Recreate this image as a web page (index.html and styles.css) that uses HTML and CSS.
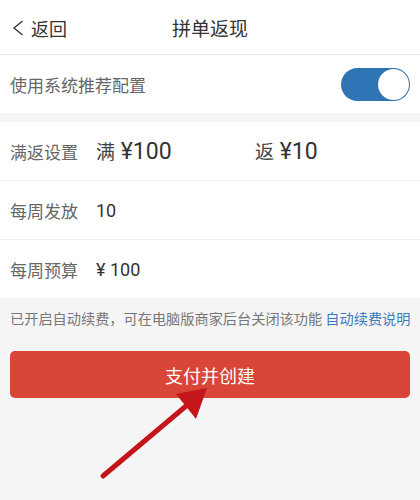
FILE: index.html
```html
<!DOCTYPE html>
<html lang="zh-CN">
<head>
  <meta charset="UTF-8">
  <meta name="viewport" content="width=device-width, initial-scale=1.0">
  <link rel="stylesheet" href="styles.css">
  <title>拼单返现</title>
</head>
<body>
  <div class="page">
    <div class="header">
      <div class="back">
        <svg class="back-icon" width="12" height="16" viewBox="0 0 12 16">
          <path d="M10.5 1 L2 8 L10.5 15" fill="none" stroke="#333" stroke-width="1.3"/>
        </svg>
        <span>返回</span>
      </div>
      <h1 class="title">拼单返现</h1>
    </div>

    <div class="switch-row">
      <span class="label">使用系统推荐配置</span>
      <div class="switch"><div class="knob"></div></div>
    </div>

    <div class="form">
      <div class="row">
        <span class="label">满返设置</span>
        <span class="big first"><span class="unit">满</span> ¥100</span>
        <span class="big"><span class="unit">返</span> ¥10</span>
      </div>
      <div class="row">
        <span class="label">每周发放</span>
        <span class="value">10</span>
      </div>
      <div class="row">
        <span class="label">每周预算</span>
        <span class="value">¥ 100</span>
      </div>
    </div>

    <div class="footer">
      <p class="note">已开启自动续费，可在电脑版商家后台关闭该功能 <a class="link">自动续费说明</a></p>
      <button class="pay">支付并创建</button>
    </div>

    <svg class="arrow" width="420" height="500" viewBox="0 0 420 500">
      <line x1="103" y1="476" x2="192" y2="401" stroke="#c4151a" stroke-width="5" stroke-linecap="round"/>
      <polygon points="207,388 176,394 196,419" fill="#c4151a"/>
    </svg>
  </div>
</body>
</html>
```

FILE: styles.css
```css
body {
  margin: 0;
  padding: 0;
  font-family: "Noto Sans CJK SC", "Noto Sans", sans-serif;
  background-color: #f5f5f5;
}

.page {
  position: relative;
  width: 420px;
  height: 500px;
  overflow: hidden;
}

.header {
  height: 55px;
  background-color: #fff;
  border-bottom: 1px solid #ececec;
  display: flex;
  align-items: center;
  justify-content: center;
  position: relative;
  box-sizing: border-box;
}

.back {
  position: absolute;
  left: 12px;
  top: 0;
  height: 55px;
  display: flex;
  align-items: center;
  gap: 7px;
  font-size: 18px;
  color: #333;
}

.title {
  margin: 0;
  font-size: 19px;
  font-weight: normal;
  color: #333;
}

.switch-row {
  height: 58px;
  background-color: #fff;
  display: flex;
  align-items: center;
  justify-content: space-between;
  padding: 0 10px;
  margin-bottom: 9px;
}

.label {
  font-size: 17px;
  color: #666;
  width: 86px;
}

.switch-row .label {
  width: auto;
}

.switch {
  width: 69px;
  height: 33px;
  border-radius: 17px;
  background-color: #2f74b5;
  position: relative;
}

.knob {
  position: absolute;
  right: 1px;
  top: 1px;
  width: 31px;
  height: 31px;
  border-radius: 50%;
  background-color: #fff;
  box-shadow: 0 0 1px rgba(0, 0, 0, 0.3);
}

.form {
  background-color: #fff;
}

.row {
  height: 58px;
  display: flex;
  align-items: center;
  padding: 0 10px;
  border-bottom: 1px solid #efefef;
}

.value {
  font-family: Roboto, "Noto Sans CJK SC", sans-serif;
  font-size: 18px;
  color: #333;
}

.big {
  font-family: Roboto, "Noto Sans CJK SC", sans-serif;
  font-size: 23px;
  color: #333;
}

.big.first {
  width: 159px;
}

.unit {
  font-family: "Noto Sans CJK SC", sans-serif;
  font-size: 19px;
  color: #444;
}

.footer {
  padding: 7px 10px;
}

.note {
  margin: 0 0 21px 0;
  font-size: 14.2px;
  line-height: 24px;
  color: #777;
  white-space: nowrap;
}

.link {
  color: #3a7bbf;
}

.pay {
  display: block;
  width: 100%;
  height: 47px;
  border: none;
  border-radius: 5px;
  background-color: #d94536;
  color: #fff;
  font-family: inherit;
  font-size: 18px;
  cursor: pointer;
}

.arrow {
  position: absolute;
  left: 0;
  top: 0;
  pointer-events: none;
}
```
